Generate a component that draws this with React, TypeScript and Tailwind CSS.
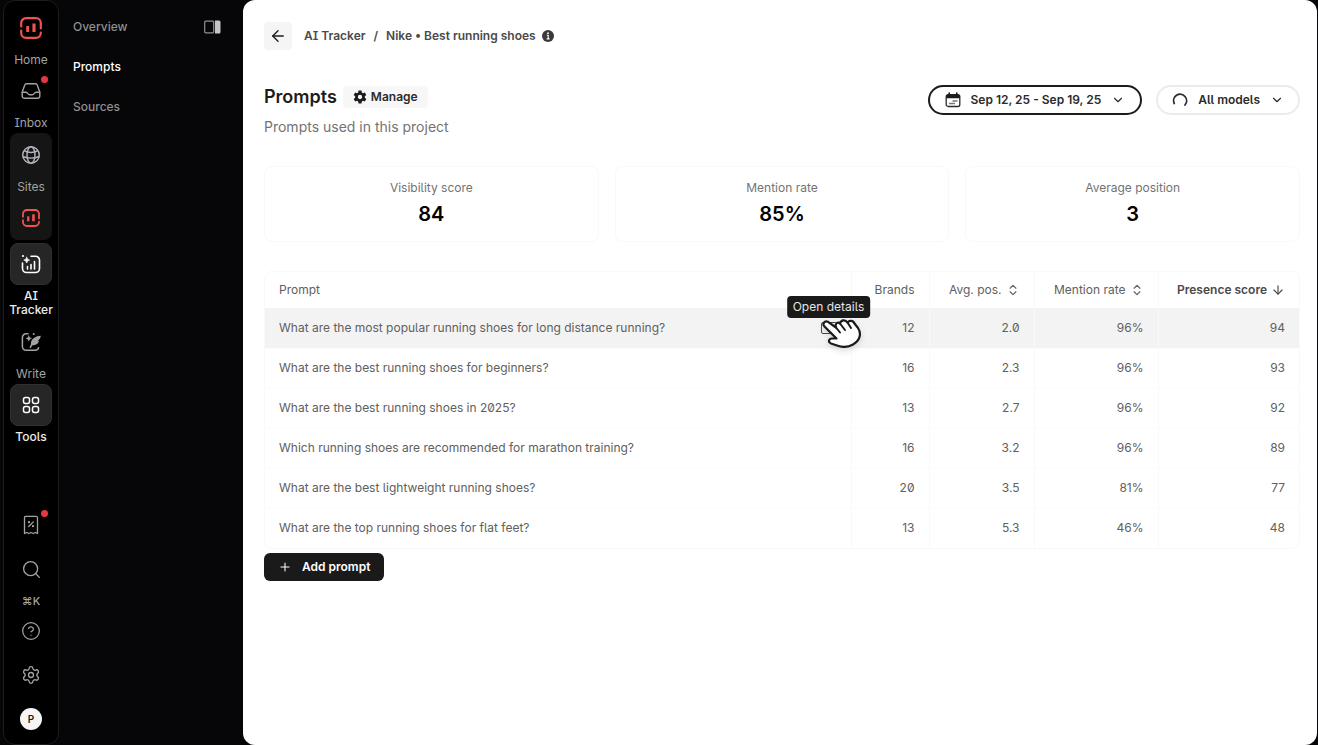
import type { ReactNode } from "react";
import {
  ArrowDown,
  ArrowLeft,
  ChevronDown,
  ChevronsUpDown,
  CircleHelp,
  Plus,
  Search,
  Settings,
} from "lucide-react";

const stats = [
  { label: "Visibility score", value: "84" },
  { label: "Mention rate", value: "85%" },
  { label: "Average position", value: "3" },
];

const rows = [
  { prompt: "What are the most popular running shoes for long distance running?", brands: 12, pos: "2.0", rate: "96%", score: 94 },
  { prompt: "What are the best running shoes for beginners?", brands: 16, pos: "2.3", rate: "96%", score: 93 },
  { prompt: "What are the best running shoes in 2025?", brands: 13, pos: "2.7", rate: "96%", score: 92 },
  { prompt: "Which running shoes are recommended for marathon training?", brands: 16, pos: "3.2", rate: "96%", score: 89 },
  { prompt: "What are the best lightweight running shoes?", brands: 20, pos: "3.5", rate: "81%", score: 77 },
  { prompt: "What are the top running shoes for flat feet?", brands: 13, pos: "5.3", rate: "46%", score: 48 },
];

function Logo({ size }: { size: number }) {
  return (
    <svg width={size} height={size} viewBox="0 0 22 22" fill="none" stroke="#f0524d" strokeWidth="2.2" strokeLinecap="round">
      <path d="M1.2 9.500V6a4.8 4.8 0 0 1 4.8-4.8h10A4.8 4.8 0 0 1 20.8 6v5.500" />
      <path d="M1.2 13.500V16A4.8 4.8 0 0 0 6 20.8h10a4.8 4.8 0 0 0 4.8-4.800v-.5" />
      <path d="M7.6 9v6" strokeWidth="2.800" strokeLinecap="butt" />
      <path d="M14 6.500V15" strokeWidth="3.200" strokeLinecap="butt" />
    </svg>
  );
}

function InboxIcon() {
  return (
    <svg width="20" height="18" viewBox="0 0 20 18" fill="none" stroke="currentColor" strokeWidth="1.4" strokeLinecap="round" strokeLinejoin="round">
      <path d="M1.2 10.4V14a2.3 2.3 0 0 0 2.300 2.300h13a2.300 2.300 0 0 0 2.300-2.300v-3.600c0-.4-.1-.7-.2-1l-2.200-6A2.300 2.300 0 0 0 14.300 1.700H5.700a2.300 2.300 0 0 0-2.100 1.700l-2.200 6c-.1.300-.2.600-.2 1z" />
      <path d="M1.300 10.300h3.500c.9 0 1.600.5 2 1.200.4.800 1.100 1.300 2 1.300h2.400c.9 0 1.600-.5 2-1.300.4-.7 1.100-1.200 2-1.200h3.500" />
    </svg>
  );
}

function GlobeIcon() {
  return (
    <svg width="20" height="20" viewBox="0 0 20 20" fill="none" stroke="#b4b4be" strokeWidth="1.400">
      <circle cx="10" cy="10" r="8.300" />
      <ellipse cx="10" cy="10" rx="4" ry="8.300" />
      <path d="M3 5.700c4.200 2.200 9.800 2.200 14 0M1.700 11.500c5 2 11.600 2 16.600 0" />
    </svg>
  );
}

function TrackerIcon() {
  return (
    <svg width="20" height="20" viewBox="0 0 20 20" fill="none" stroke="#fff" strokeWidth="1.6" strokeLinecap="round">
      <path d="M10 2.2h4.500a4 4 0 0 1 4 4v8.300a4 4 0 0 1-4 4H5.500a4 4 0 0 1-4-4V9" />
      <path d="M6.500 12.500v2.500M10 10.500v4.500M13.500 7.500v7.500" />
      <path d="M5.700 3.200l.9 2 2 .9-2 .9-.9 2-.9-2-2-.9 2-.9z" fill="#fff" strokeWidth=".6" />
      <circle cx="2" cy="2" r="1.100" fill="#fff" stroke="none" />
    </svg>
  );
}

function WriteIcon() {
  return (
    <svg width="20" height="20" viewBox="0 0 20 20" fill="none" stroke="#a3a3a3" strokeWidth="1.500" strokeLinecap="round">
      <path d="M7 1.800H5a3.600 3.600 0 0 0-3.600 3.600v9.200A3.600 3.600 0 0 0 5 18.200h9.200a3.600 3.600 0 0 0 3.400-2.400" />
      <path d="M7.800 3.800l.8 1.800 1.900.8-1.900.8-.8 1.900-.8-1.900-1.900-.8 1.900-.8z" fill="#a3a3a3" strokeWidth=".5" />
      <path d="M19.800 3.800c-4.900.3-9.100 2.700-9.800 6.700-.2 1-.1 1.900.1 2.800 4.700.4 7.700-2 7.800-4.300-.6.100-1 0-1.300-.1 1.800-1 2.900-2.600 3.200-5.100z" fill="#a3a3a3" stroke="none" />
      <path d="M9.400 15.300c.6-2.200 2-4.300 4.600-6.300" />
      <circle cx="12.700" cy="2" r="1" fill="#a3a3a3" stroke="none" />
    </svg>
  );
}

function ToolsIcon() {
  return (
    <svg width="18" height="18" viewBox="0 0 18 18" fill="none" stroke="#fff" strokeWidth="1.500">
      <rect x="1.500" y="1.500" width="6" height="6" rx="2" />
      <rect x="10.500" y="1.500" width="6" height="6" rx="2" />
      <rect x="1.500" y="10.500" width="6" height="6" rx="2" />
      <rect x="10.500" y="10.500" width="6" height="6" rx="2" />
    </svg>
  );
}

function ReceiptIcon() {
  return (
    <svg width="18" height="20" viewBox="0 0 18 20" fill="none" stroke="currentColor" strokeWidth="1.300" strokeLinejoin="round" strokeLinecap="round">
      <path d="M2.500 18.500V2.700c0-.8.500-1.300 1.300-1.300h10.400c.8 0 1.300.5 1.300 1.300v15.800l-2.200-1-2.100 1-2.200-1-2.200 1-2.100-1z" />
      <path d="M6.700 11.500l4.600-4.600" />
      <circle cx="7" cy="7.200" r=".5" fill="currentColor" />
      <circle cx="11" cy="11.200" r=".5" fill="currentColor" />
    </svg>
  );
}

function PanelIcon() {
  return (
    <svg width="17" height="14" viewBox="0 0 17 14" fill="none">
      <rect x=".7" y="1.200" width="9" height="11.600" rx="1" stroke="#8f8f8f" strokeWidth="1.200" />
      <path d="M11 .6h4a1.500 1.500 0 0 1 1.500 1.500v9.800a1.500 1.500 0 0 1-1.500 1.500h-4z" fill="#c4c4c4" />
    </svg>
  );
}

function CogIcon() {
  return (
    <svg width="14" height="14" viewBox="0 0 24 24" fill="#1c1c1c">
      <path fillRule="evenodd" d="M9.500 1h5l.7 3.300 1.900 1.100 3.200-1.100 2.500 4.400-2.500 2.200v2.200l2.500 2.200-2.500 4.400-3.200-1.100-1.900 1.100-.7 3.300h-5l-.7-3.300-1.900-1.100-3.200 1.100-2.500-4.400 2.500-2.200v-2.200L1.200 8.700l2.500-4.400 3.200 1.100 1.900-1.100zM12 8.300a3.700 3.700 0 1 0 0 7.400 3.700 3.700 0 0 0 0-7.400z" />
    </svg>
  );
}

function CalendarIcon() {
  return (
    <svg width="16" height="16" viewBox="0 0 16 16" fill="none">
      <rect x="1.200" y="2.700" width="13.600" height="11.800" rx="2" stroke="#2b2b2b" strokeWidth="1.300" />
      <path d="M1.200 6.300V4.500c0-1.200.8-2 2-2h9.600c1.200 0 2 .8 2 2v1.800z" fill="#1c1c1c" />
      <path d="M4.200 1v2.500M11.800 1v2.500" stroke="#1c1c1c" strokeWidth="1.600" strokeLinecap="round" />
      <path d="M7.500 9h5M4 11.500h6" stroke="#777" strokeWidth="1.500" />
    </svg>
  );
}

function InfoIcon() {
  return (
    <svg width="12" height="12" viewBox="0 0 12 12">
      <circle cx="6" cy="6" r="6" fill="#3a3a3a" />
      <circle cx="6" cy="3.200" r=".9" fill="#fff" />
      <path d="M4.800 5.300h1.400v3.400M4.600 8.900h3" stroke="#fff" strokeWidth="1.100" fill="none" />
    </svg>
  );
}

function HandCursor() {
  return (
    <svg width="42" height="34" viewBox="0 0 42 34" className="drop-shadow-md">
      <path
        d="M3.500 8.500C1 6 3.500 2 7 3.800l8 5.700c-1.500-4 2-6 4-4 1-4 5.500-4 7.500-1 2.500-3 6-1.500 7 1l3.500 4.500c4 6 1.500 13-5 16.500-6 3.500-12 2.500-16 1l-6-2c-3.500-1.500-2-5 1-5h4.500z"
        fill="#fff"
        stroke="#1a1a1a"
        strokeWidth="2.200"
        strokeLinejoin="round"
      />
      <path d="M15 9.500l4 5M19 5.500l5 6.500M26.500 4.500l3.500 5.500" stroke="#1a1a1a" strokeWidth="2" strokeLinecap="round" />
    </svg>
  );
}

function RailItem({ label, active, badge, children }: { label?: string; active?: boolean; badge?: boolean; children: ReactNode }) {
  return (
    <a href="#" aria-label={label ?? "Current site"} className={`flex w-full flex-col items-center gap-1 ${active ? "font-medium text-[#ededed]" : "text-[#a3a3a3]"}`}>
      <span className={`relative flex size-[42px] items-center justify-center rounded-lg ${active ? "border border-[#303030] bg-[#262626]" : ""}`}>
        {children}
        {badge && <span className="absolute top-1.5 right-1 size-[7px] rounded-full bg-[#e5383f]" />}
      </span>
      {label && <span className="text-center text-xs leading-[14px]">{label}</span>}
    </a>
  );
}

function RailButton({ label, badge, children }: { label: string; badge?: boolean; children: ReactNode }) {
  return (
    <button aria-label={label} className="relative flex size-[42px] items-center justify-center">
      {children}
      {badge && <span className="absolute top-1.5 right-1 size-[7px] rounded-full bg-[#e5383f]" />}
    </button>
  );
}

function Rail() {
  return (
    <nav className="flex w-14 shrink-0 flex-col items-center justify-between rounded-xl border border-[#1c1c1c] bg-black pt-1.5 pb-1">
      <div className="flex w-full flex-col items-center gap-[3px]">
        <RailItem label="Home"><Logo size={22} /></RailItem>
        <RailItem label="Inbox" badge><InboxIcon /></RailItem>
        <div className="flex w-[42px] flex-col items-center gap-[3px] rounded-lg bg-[#151515] py-px">
          <RailItem label="Sites"><GlobeIcon /></RailItem>
          <RailItem><Logo size={18} /></RailItem>
        </div>
        <RailItem label="AI Tracker" active><TrackerIcon /></RailItem>
        <div className="mt-px w-full"><RailItem label="Write"><WriteIcon /></RailItem></div>
        <RailItem label="Tools" active><ToolsIcon /></RailItem>
      </div>
      <div className="flex flex-col items-center gap-0.5 text-[#a3a3a3]">
        <RailButton label="Billing" badge><ReceiptIcon /></RailButton>
        <RailButton label="Search"><Search size={21} strokeWidth={1.5} /></RailButton>
        <span className="mt-0.5 text-[11px] leading-[14px] font-medium">⌘K</span>
        <RailButton label="Help"><CircleHelp size={20} strokeWidth={1.5} /></RailButton>
        <RailButton label="Settings"><Settings size={20} strokeWidth={1.6} /></RailButton>
        <RailButton label="Account">
          <span className="flex size-[22px] items-center justify-center rounded-full bg-[#f5f5f5] text-[10px] font-semibold text-[#1c1c1c]">P</span>
        </RailButton>
      </div>
    </nav>
  );
}

function SubNav() {
  return (
    <nav className="flex w-[184px] shrink-0 flex-col px-[14px] pt-[7px] text-xs font-medium text-[#8f8f8f]">
      <div className="flex h-10 items-center justify-between pr-2">
        <a href="#">Overview</a>
        <button aria-label="Toggle panel"><PanelIcon /></button>
      </div>
      <a href="#" className="flex h-10 items-center text-white">Prompts</a>
      <a href="#" className="flex h-10 items-center">Sources</a>
    </nav>
  );
}

function Header() {
  return (
    <header>
      <div className="flex h-7 items-center gap-3 text-xs font-semibold text-[#4a4a4a]">
        <button aria-label="Back" className="flex size-7 items-center justify-center rounded bg-[#f5f5f5] text-[#1c1c1c]">
          <ArrowLeft size={18} strokeWidth={1.8} />
        </button>
        <div className="flex items-center gap-2">
          <a href="#">AI Tracker</a>
          <span>/</span>
          <span className="flex items-center gap-1.5">Nike • Best running shoes <InfoIcon /></span>
        </div>
      </div>
      <div className="mt-[35px] flex items-start justify-between">
        <div>
          <div className="flex h-6 items-center gap-1.5">
            <h1 className="text-lg leading-6 font-semibold text-[#1c1c1c]">Prompts</h1>
            <button className="flex h-[22px] items-center gap-1 rounded bg-[#f7f7f7] px-2.5 text-xs font-semibold text-[#2b2b2b]">
              <CogIcon /> Manage
            </button>
          </div>
          <p className="mt-2 text-sm leading-5 text-[#737373]">Prompts used in this project</p>
        </div>
        <div className="flex gap-3.5 text-xs font-semibold text-[#2b2b2b]">
          <button className="flex h-[30px] items-center gap-2.5 rounded-full border-2 border-[#1c1c1c] px-[15px]">
            <CalendarIcon /> Sep 12, 25 - Sep 19, 25 <ChevronDown size={14} />
          </button>
          <button className="flex h-[30px] items-center gap-2.5 rounded-full border-2 border-[#ebebeb] px-3.5">
            <svg width="16" height="16" viewBox="0 0 16 16" fill="none" stroke="#2b2b2b" strokeWidth="1.800" strokeLinecap="round">
              <path d="M2.200 11.500A6.500 6.500 0 1 1 13 13" />
            </svg>
            All models <ChevronDown size={14} />
          </button>
        </div>
      </div>
    </header>
  );
}

function PromptTable() {
  return (
    <div className="mt-[29px] rounded-lg border border-[#f9f9f9]">
      <table className="w-full table-fixed text-xs text-[#606060]">
        <colgroup>
          <col />
          <col className="w-[78px]" />
          <col className="w-[105px]" />
          <col className="w-[124px]" />
          <col className="w-[141px]" />
        </colgroup>
        <thead>
          <tr className="h-9 *:font-normal">
            <th className="px-3.5 text-left">Prompt</th>
            <th className="border-l border-[#f9f9f9] px-3.5 text-right">Brands</th>
            <th className="border-l border-[#f9f9f9] px-3.5">
              <button className="flex w-full items-center justify-end gap-1">Avg. pos. <ChevronsUpDown size={14} /></button>
            </th>
            <th className="border-l border-[#f9f9f9] px-3.5">
              <button className="flex w-full items-center justify-end gap-1">Mention rate <ChevronsUpDown size={14} /></button>
            </th>
            <th className="border-l border-[#f9f9f9] px-3.5">
              <button className="flex w-full items-center justify-end gap-1 font-semibold text-[#4a4a4a]">Presence score <ArrowDown size={14} /></button>
            </th>
          </tr>
        </thead>
        <tbody>
          {rows.map((row, i) => (
            <tr key={row.prompt} className={i === 0 ? "h-10 bg-[#f3f3f3]" : "h-10 border-t border-[#fbfbfb]"}>
              <td className="px-3.5">
                <div className="flex items-center justify-between">
                  <span>{row.prompt}</span>
                  {i === 0 && (
                    <span className="relative">
                      <button aria-label="Open details" className="block h-3 w-4 rounded-xs border border-[#4a4a4a]" />
                      <span role="tooltip" className="absolute bottom-full left-1/2 mb-1 -translate-x-1/2 rounded bg-[#1a1a1a] px-1.5 text-xs leading-[22px] whitespace-nowrap text-[#e5e5e5]">
                        Open details
                      </span>
                      <span className="absolute -top-1 left-0"><HandCursor /></span>
                    </span>
                  )}
                </div>
              </td>
              <td className="border-l border-[#f9f9f9] px-3.5 text-right">{row.brands}</td>
              <td className="border-l border-[#f9f9f9] px-3.5 text-right">{row.pos}</td>
              <td className="border-l border-[#f9f9f9] px-3.5 text-right">{row.rate}</td>
              <td className="border-l border-[#f9f9f9] px-3.5 text-right">{row.score}</td>
            </tr>
          ))}
        </tbody>
      </table>
    </div>
  );
}

export default function App() {
  return (
    <div className="flex min-h-screen bg-[#060608] pr-px pl-[3px] font-[Inter,sans-serif] [font-feature-settings:'ss02','zero']">
      <Rail />
      <SubNav />
      <main className="min-w-0 grow rounded-xl bg-white pt-[22px] pr-[17px] pb-6 pl-[21px]">
        <Header />
        <section className="mt-[29px] grid grid-cols-3 gap-4">
          {stats.map((stat) => (
            <div key={stat.label} className="flex h-[76px] flex-col items-center justify-center gap-1 rounded-lg border border-[#f9f9f9]">
              <span className="text-xs leading-4 text-[#737373]">{stat.label}</span>
              <span className="text-xl leading-7 font-semibold text-black">{stat.value}</span>
            </div>
          ))}
        </section>
        <PromptTable />
        <button className="mt-1 flex h-7 items-center gap-2.5 rounded-md bg-[#1a1a1a] px-3.5 text-xs font-semibold text-white">
          <Plus size={14} strokeWidth={1.800} /> Add prompt
        </button>
      </main>
    </div>
  );
}
